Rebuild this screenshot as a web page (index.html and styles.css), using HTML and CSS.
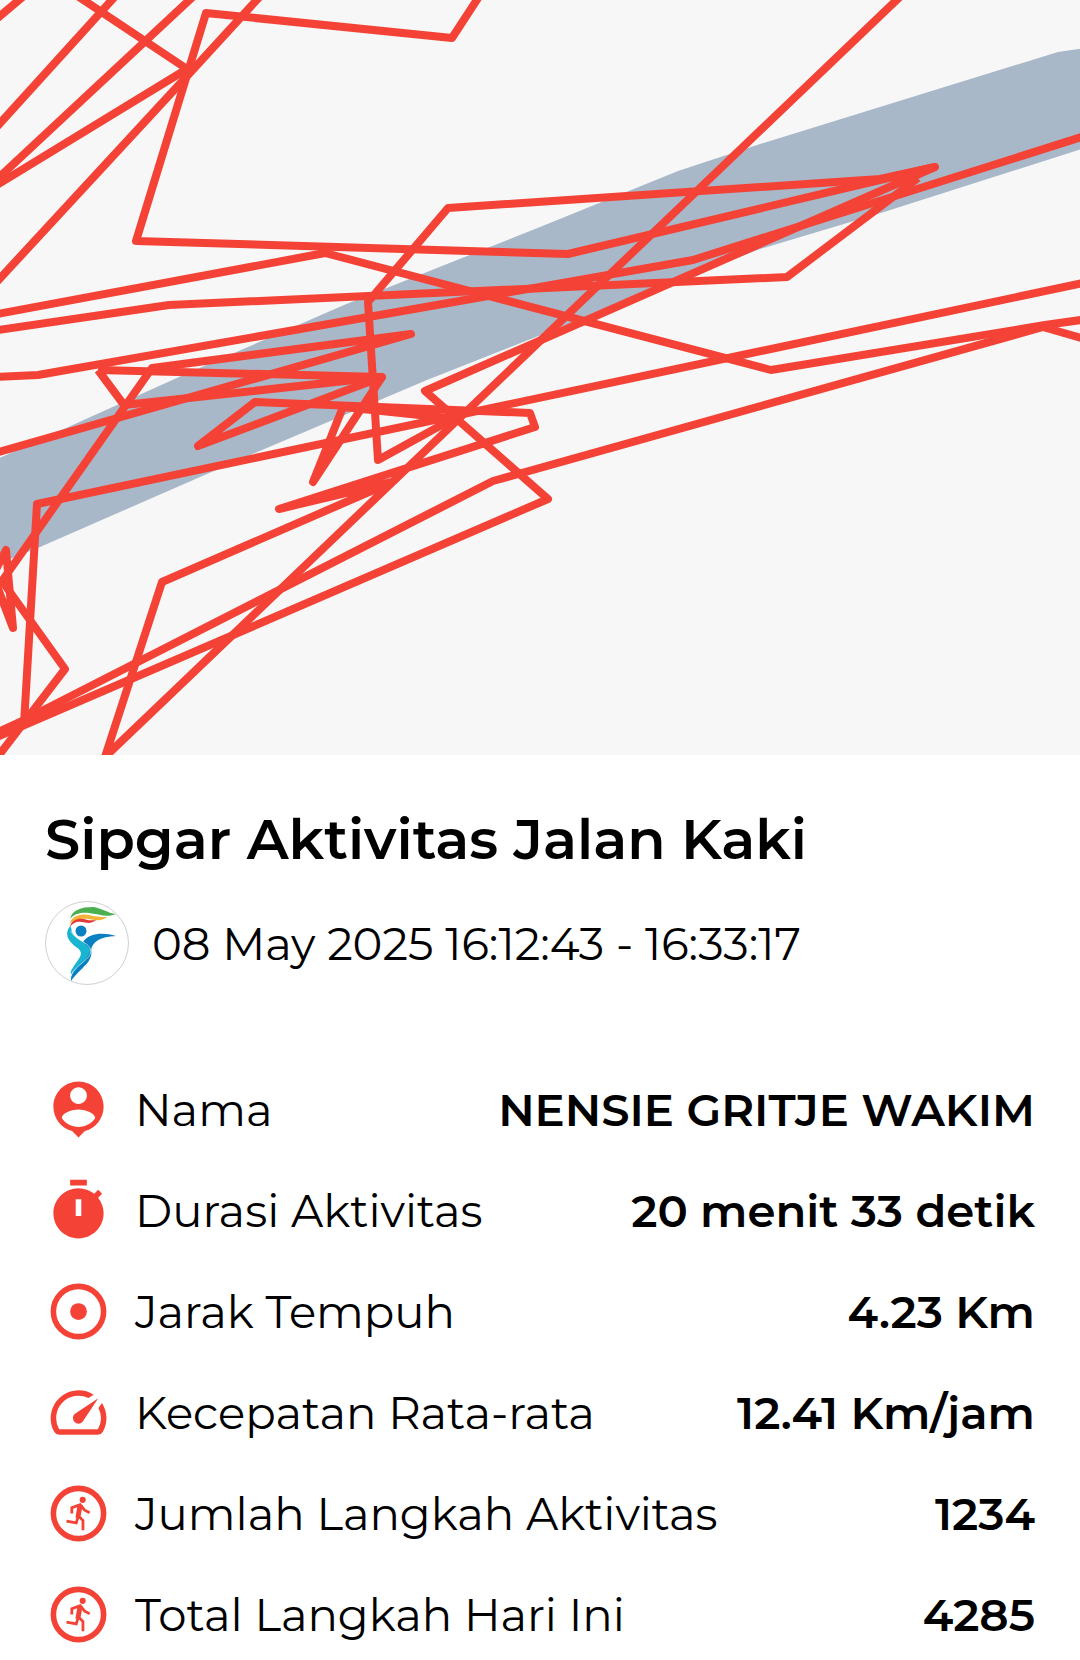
FILE: index.html
```
<!DOCTYPE html>
<html lang="id">
<head>
  <meta charset="UTF-8" />
  <meta name="viewport" content="width=device-width, initial-scale=1.0" />
  <title>Sipgar Aktivitas Jalan Kaki</title>
  <link rel="stylesheet" href="styles.css">
</head>
<body>
  <!-- Peta rute -->
  <svg class="map" viewBox="0 0 1080 755" role="img" aria-label="Peta rute aktivitas">
    <path class="road" d="M-5 460 55 433 179 377 344 305 540 227 678 171 760 144 1058 52 1085 48V148L884 212 760 249 592 315 427 380 255 453 40 547-5 565Z" />
    <g class="route">
      <path d="M-12 26 31-10" />
      <path d="M-8 132 120-9" />
      <path d="M-8 184 198-8" />
      <path d="M73-7 187 69 -8 188" />
      <path d="M264-8 188 75-8 287" />
      <path d="M482-8 452 38 206 13 136 241 568 254 935 167 425 391 548 499-8 739" />
      <path d="M-8 315 325 253 771 370 1045 325 1088 319" />
      <path d="M-8 331 169 305 787 277 918 178" />
      <path d="M935 167 880 179 448 208 368 302 378 460 458 416" />
      <path d="M-8 377 38 375 693 260 1088 135" />
      <path d="M-8 454 411 334 152 368 2 581 65 669-4 759" />
      <path d="M98 370 124 405 382 377 98 370" />
      <path d="M382 377 198 446 255 402 530 413 535 427 279 509 392 482 162 582 105 757 905-8" />
      <path d="M382 377 313 482 343 407 458 419" />
      <path d="M1088 282 37 504 24 724" />
      <path d="M-8 735 24 720 493 481 1043 327 1088 340" />
      <path d="M-8 577 6 550 13 628-8 573" />
    </g>
  </svg>

  <main class="detail">
    <h1>Sipgar Aktivitas Jalan Kaki</h1>
    <div class="when">
      <svg class="logo" viewBox="0 0 84 84" aria-hidden="true">
        <circle cx="42" cy="42" r="41.5" fill="#fff" stroke="#c4c4c4" stroke-width=".8" />
        <path fill="#4caf50" d="M25 18C27 9 36 6 48 6c9 1 14 6 23 7-9 4-17 0-27-1-9-1-15 1-19 6z" />
        <path fill="#f5b335" d="M25 23c1-7 9-11 19-9 8 2 12 2 18 2-6 5-12 3-18 2-9-1-16 1-19 5z" />
        <path fill="#e53935" d="M25 26c1-7 8-9 14-8 5 2 8 1 12 1-5 4-9 3-14 2-6-1-9 1-12 5z" />
        <circle cx="36" cy="30" r="5.5" fill="#0a7fc1" />
        <path fill="#17b5d0" d="M25 25c-6 8-2 15 6 21 8 5 5 9 0 16-4 6-6 8-5 12 5-9 19-15 20-25-1-6-13-9-18-16-2-3-1-6-3-8z" />
        <path fill="#0a7fc1" d="M71 35c-13-4-27-3-33 6l8 8c2-9 9-13 25-14z" />
        <path fill="#0a7fc1" d="M46 48c3 13-10 18-20 32-1-13 17-19 20-32z" />
        <path fill="none" stroke="#fff" stroke-width=".6" d="M26 30c3 9 19 11 20 20 0 8-15 14-20 24" />
      </svg>
      <span>08 May 2025 16:12:43 - 16:33:17</span>
    </div>

    <!-- Ringkasan aktivitas -->
    <dl class="stats">
      <div class="row">
        <svg class="icon" viewBox="0 0 24 24" aria-hidden="true"><path d="M12 2c-4.97 0-9 4.03-9 9 0 4.17 2.84 7.67 6.69 8.69L12 22l2.31-2.31C18.16 18.67 21 15.17 21 11c0-4.97-4.03-9-9-9zm0 2c1.66 0 3 1.34 3 3s-1.34 3-3 3-3-1.34-3-3 1.34-3 3-3zm0 14.3c-2.5 0-4.71-1.28-6-3.22.03-1.99 4-3.08 6-3.08 1.99 0 5.97 1.09 6 3.08-1.29 1.94-3.5 3.22-6 3.22z" /></svg>
        <dt>Nama</dt>
        <dd>NENSIE GRITJE WAKIM</dd>
      </div>
      <div class="row">
        <svg class="icon" viewBox="0 0 24 24" aria-hidden="true"><path d="M15 1H9v2h6V1zm-4 13h2V8h-2v6zm8.03-6.61l1.42-1.42c-.43-.51-.9-.99-1.41-1.41l-1.42 1.42C16.07 4.74 14.12 4 12 4c-4.97 0-9 4.03-9 9s4.02 9 9 9 9-4.03 9-9c0-2.12-.74-4.07-1.97-5.61z" /></svg>
        <dt>Durasi Aktivitas</dt>
        <dd>20 menit 33 detik</dd>
      </div>
      <div class="row">
        <svg class="icon" viewBox="0 0 24 24" aria-hidden="true"><circle class="ring" cx="12" cy="12" r="9" /><circle cx="12" cy="12" r="3" /></svg>
        <dt>Jarak Tempuh</dt>
        <dd>4.23 Km</dd>
      </div>
      <div class="row">
        <svg class="icon" viewBox="0 0 24 24" aria-hidden="true"><path d="M20.38 8.57l-1.23 1.85a8 8 0 0 1-.22 7.58H5.07A8 8 0 0 1 15.58 6.85l1.85-1.23A10 10 0 0 0 3.35 19a2 2 0 0 0 1.72 1h13.85a2 2 0 0 0 1.74-1 10 10 0 0 0-.27-10.44zm-9.79 6.84a2 2 0 0 0 2.83 0l5.66-8.49-8.49 5.66a2 2 0 0 0 0 2.83z" /></svg>
        <dt>Kecepatan Rata-rata</dt>
        <dd>12.41 Km/jam</dd>
      </div>
      <div class="row">
        <svg class="icon" viewBox="0 0 24 24" aria-hidden="true">
          <circle class="ring" cx="12" cy="12" r="9" />
          <g id="runner">
            <circle cx="13.5" cy="7.1" r="1.1" />
            <path class="limb" d="M9.6 12V9.9l3-1.1 1.6 2 1.8.9M11.9 13l-.7 2.4-3.5-.7M12 12.9l1.6 1.6V18" />
            <path d="M11.7 8.9l1.8.1-.9 4.7-1.7-.3z" />
          </g>
        </svg>
        <dt>Jumlah Langkah Aktivitas</dt>
        <dd>1234</dd>
      </div>
      <div class="row">
        <svg class="icon" viewBox="0 0 24 24" aria-hidden="true"><circle class="ring" cx="12" cy="12" r="9" /><use href="#runner" /></svg>
        <dt>Total Langkah Hari Ini</dt>
        <dd>4285</dd>
      </div>
    </dl>
  </main>
</body>
</html>
```
FILE: styles.css
```
body {
  margin: 0;
  background-color: #fff;
  color: #000;
  font-family: Montserrat, Inter, sans-serif;
}
.map {
  display: block;
  width: 100%;
  height: auto;
  background-color: #f7f7f7;
}
.road {
  fill: #a9b8c9;
}
.route {
  fill: none;
  stroke: #f44336;
  stroke-width: 8px;
  stroke-linejoin: round;
}
.detail {
  padding: 50px 45px 11px;
}
h1 {
  margin: 0;
  font-size: 56px;
  line-height: 68px;
  font-weight: 600;
}
.when {
  display: flex;
  align-items: center;
  gap: 23px;
  margin-top: 28px;
  font-size: 45px;
  font-weight: 400;
}
.logo {
  flex: none;
  width: 84px;
  height: 84px;
}
.stats {
  display: flex;
  flex-direction: column;
  gap: 34px;
  margin: 91px 0 0;
  font-size: 45px;
  line-height: 54px;
}
.row {
  display: flex;
  align-items: center;
}
.icon {
  flex: none;
  width: 67px;
  height: 67px;
  margin-right: 23px;
  fill: #f44336;
  fill-rule: evenodd;
}
.ring {
  fill: none;
  stroke: #f44336;
  stroke-width: 2px;
}
.limb {
  fill: none;
  stroke: #f44336;
  stroke-width: 1px;
}
dt {
  font-weight: 400;
}
dd {
  margin: 0 0 0 auto;
  font-weight: 600;
  text-align: right;
}
```
